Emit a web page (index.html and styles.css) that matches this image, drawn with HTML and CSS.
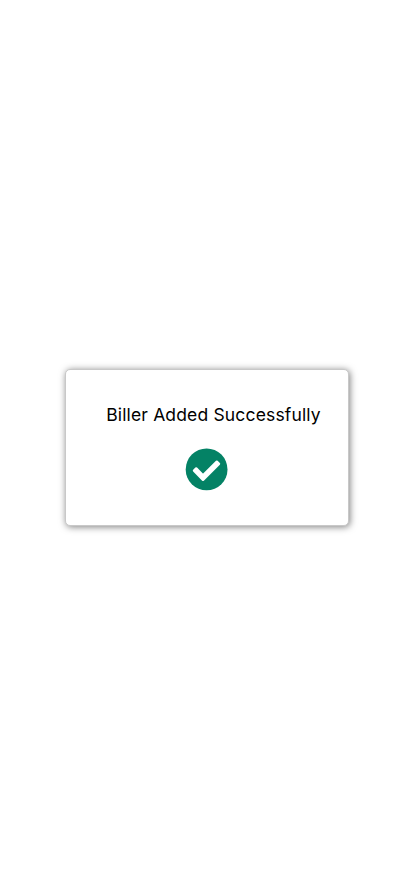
FILE: index.html
```html
<!DOCTYPE html>
<html lang="en">
<head>
<meta charset="utf-8">
<title>Biller Added</title>
<link rel="stylesheet" href="styles.css">
</head>
<body>
<main class="card">
  <p class="message">Biller Added Successfully</p>
  <svg class="check" viewBox="0 0 42 42" aria-hidden="true">
    <circle class="disc" cx="20.6" cy="21.4" r="20.9"/>
    <path class="tick" d="M10.2 20.4 L17 27.3 L30.8 13.7 L33 15.9 L17 31.8 L8 22.6 Z"/>
  </svg>
</main>
</body>
</html>
```

FILE: styles.css
```css
* { box-sizing: border-box; }
body {
  margin: 0;
  min-height: 100vh;
  padding-bottom: 1px;
  display: flex;
  align-items: center;
  justify-content: center;
  background: #fff;
}
.card {
  width: 284px;
  height: 157px;
  padding: 34px 0 0;
  display: flex;
  flex-direction: column;
  align-items: center;
  background: #fff;
  border: 1px solid #c8c8c8;
  border-radius: 5px;
  box-shadow: 1px 1px 7px rgba(0, 0, 0, 0.5);
}
.message {
  margin: 0 0 0 13px;
  font: 400 17.5px/22px Inter, sans-serif;
  letter-spacing: 0.16px;
  color: #000;
  white-space: nowrap;
}
.check {
  width: 42px;
  height: 42px;
  margin: 22px 1px 0 0;
  flex: none;
  overflow: visible;
}
.disc { fill: #048265; }
.tick {
  fill: #fff;
  stroke: #fff;
  stroke-width: 2.4;
  stroke-linejoin: round;
}
```
